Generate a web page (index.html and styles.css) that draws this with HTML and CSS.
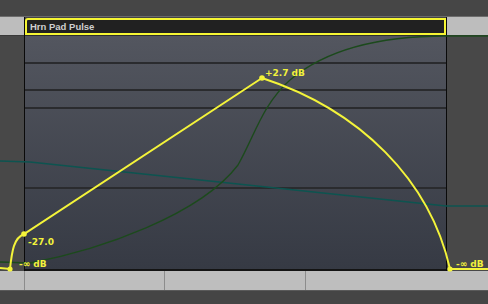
FILE: index.html
```html
<!DOCTYPE html>
<html lang="en">
<head>
  <meta charset="UTF-8">
  <title>Automation</title>
  <link rel="stylesheet" href="styles.css">
</head>
<body>
  <div class="editor">
    <div class="top"></div>
    <div class="track">
      <div class="side side-left">
        <div class="lane-head"></div>
        <div class="lane-body"></div>
      </div>
      <div class="region">
        <div class="region-head">Hrn Pad Pulse</div>
        <div class="region-body">
          <div class="grid-line" style="margin-top: 26px"></div>
          <div class="grid-line" style="margin-top: 25px"></div>
          <div class="grid-line" style="margin-top: 16px"></div>
          <div class="grid-line" style="margin-top: 78px"></div>
        </div>
      </div>
      <div class="side">
        <div class="lane-head"></div>
        <div class="lane-body"></div>
      </div>
    </div>
    <div class="ruler">
      <div class="cell" style="width: 25px"></div>
      <div class="cell" style="width: 140px"></div>
      <div class="cell" style="width: 141px"></div>
      <div class="cell cell-last"></div>
    </div>
    <div class="bottom"></div>

    <svg class="curves" width="488" height="304" viewBox="0 0 488 304">
      <path d="M0 161 L30 162 L446 206 L488 206" fill="none" stroke="#0d5450" stroke-width="1.3"/>
      <path d="M0 262 L30 263 C100 250, 200 215, 238 165 C255 135, 262 105, 290 80 C330 46, 390 36, 446 36 L488 36" fill="none" stroke="#1c4a1c" stroke-width="1.3"/>
      <path d="M0 268 L10 269 C12 250, 14 238, 24 234 L262 78 C360 110, 430 180, 450 269 L488 269" fill="none" stroke="#f4f43a" stroke-width="2"/>
      <circle cx="10" cy="269" r="2.6" fill="#f4f43a"/>
      <circle cx="24" cy="234" r="2.8" fill="#f4f43a"/>
      <circle cx="262" cy="78" r="2.8" fill="#f4f43a"/>
      <circle cx="450" cy="269" r="2.6" fill="#f4f43a"/>
      <text class="label" x="265" y="76">+2.7 dB</text>
      <text class="label" x="28" y="245">-27.0</text>
      <text class="label" x="19" y="267">-∞ dB</text>
      <text class="label" x="456" y="267">-∞ dB</text>
    </svg>
  </div>
</body>
</html>
```

FILE: styles.css
```css
body {
  margin: 0;
  background-color: #454545;
  font-family: "Liberation Sans", Arial, sans-serif;
}
.editor {
  position: relative;
  width: 488px;
  height: 304px;
  overflow: hidden;
}
.top {
  height: 16px;
  background-color: #464646;
  border-bottom: 1px solid #6c6c6c;
}
.track {
  display: flex;
  height: 254px;
}
.side {
  flex: 1;
  display: flex;
  flex-direction: column;
}
.side-left {
  flex: none;
  width: 24px;
}
.lane-head {
  height: 18px;
  background-color: #bdbdbd;
  border-bottom: 1px solid #3a3a3a;
}
.lane-body {
  flex: 1;
  background-color: #484848;
}
.region {
  width: 421px;
  display: flex;
  flex-direction: column;
  border-left: 1px solid #0a0a0a;
  border-right: 1px solid #0a0a0a;
}
.region-head {
  height: 13px;
  margin-top: 1px;
  background-color: #212121;
  border: 2px solid #f6f633;
  border-radius: 3px 0 0 0;
  color: #d0d0d0;
  font-size: 9.5px;
  font-weight: bold;
  line-height: 13px;
  padding-left: 3px;
}
.region-body {
  flex: 1;
  background: linear-gradient(#53565f, #363a44);
  border-top: 1px solid #2c2d30;
  border-bottom: 2px solid #141414;
}
.grid-line {
  height: 2px;
  background-color: #2a2b2e;
}
.ruler {
  display: flex;
  height: 19px;
  background-color: #bebebe;
  border-bottom: 1px solid #5a5a5a;
}
.cell {
  border-right: 1px solid #8c8c8c;
  box-sizing: border-box;
}
.cell-last {
  flex: 1;
  border-right: none;
}
.bottom {
  height: 14px;
  background-color: #454545;
}
.curves {
  position: absolute;
  left: 0;
  top: 0;
}
.label {
  fill: #f2f23c;
  font-family: "DejaVu Sans", sans-serif;
  font-size: 9px;
  font-weight: bold;
}
```
